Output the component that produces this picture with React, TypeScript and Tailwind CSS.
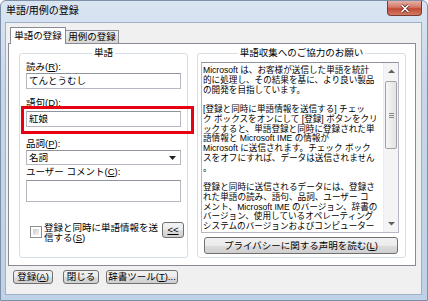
import React from "react";

const U = ({ children }: { children: React.ReactNode }) => (
  <span className="underline underline-offset-[1px]">{children}</span>
);

const btn =
  "flex items-center justify-center rounded-[3px] border border-[#707070] bg-[linear-gradient(#f2f2f2,#ebebeb_50%,#dddddd_50%,#cfcfcf)] leading-[10px] text-black";

const field = "border border-[#b5b9c1] border-t-[#8e939c] bg-white";

const infoLines = [
  "Microsoft は、お客様が送信した単語を統計",
  "的に処理し、その結果を基に、より良い製品",
  "の開発を目指しています。",
  "",
  "[登録と同時に単語情報を送信する] チェッ",
  "ク ボックスをオンにして [登録] ボタンをクリ",
  "ックすると、単語登録と同時に登録された単",
  "語情報と Microsoft IME の情報が",
  "Microsoft に送信されます。チェック ボック",
  "スをオフにすれば、データは送信されません",
  "。",
  "",
  "登録と同時に送信されるデータには、登録さ",
  "れた単語の読み、語句、品詞、ユーザー コ",
  "メント、Microsoft IME のバージョン、辞書の",
  "バージョン、使用しているオペレーティング",
  "システムのバージョンおよびコンピューター",
];

const GroupBox = ({
  title,
  className,
  children,
}: {
  title: string;
  className: string;
  children: React.ReactNode;
}) => (
  <div className={`relative rounded-[3px] border border-[#d5dfe5] ${className}`}>
    <div className="absolute -top-[6px] left-0 right-0 flex justify-center">
      <span className="bg-white px-[2px] leading-[10px]">{title}</span>
    </div>
    {children}
  </div>
);

const ScrollBar = () => (
  <div className="flex w-[15px] shrink-0 flex-col bg-[#f4f4f4] border-l border-[#ececec]">
    <div className="flex h-[16px] items-center justify-center">
      <svg width="7" height="4" viewBox="0 0 7 4">
        <path d="M0 4L3.5 0.5L7 4Z" fill="#606060" />
      </svg>
    </div>
    <div className="mx-[1px] mt-[2px] flex h-[68px] flex-col items-center justify-center gap-[1px] rounded-[2px] border border-[#a3a3a3] bg-[linear-gradient(90deg,#f6f6f6,#e3e3e3)]">
      <div className="h-px w-[5px] bg-[#8a8a8a]" />
      <div className="h-px w-[5px] bg-[#8a8a8a]" />
      <div className="h-px w-[5px] bg-[#8a8a8a]" />
    </div>
    <div className="flex-1" />
    <div className="flex h-[16px] items-center justify-center">
      <svg width="7" height="4" viewBox="0 0 7 4">
        <path d="M0 0L3.5 3.5L7 0Z" fill="#606060" />
      </svg>
    </div>
  </div>
);

export default function App() {
  return (
    <div className="relative h-[301px] w-[428px] overflow-hidden bg-white font-['Liberation_Sans','Noto_Sans_CJK_JP',sans-serif] text-[9.5px] text-black">
      <div className="flex h-[301px] w-[428px] flex-col rounded-t-[6px] border border-[#7d90a8] bg-[linear-gradient(#dae5f2,#c6d7ea_30%,#bfd1e7)]">
        {/* title bar */}
        <div className="flex h-[21px] shrink-0 items-start justify-between pl-[5px] pr-[5px]">
          <span className="mt-[4px] text-[10px] leading-[11px]">単語/用例の登録</span>
          <div className="flex h-[15px] w-[35px] items-center justify-center rounded-b-[4px] border border-t-0 border-[#7b3a31] bg-[linear-gradient(#e6b1a8,#d47766_45%,#c24a36_55%,#d27a63)]">
            <svg width="10" height="9" viewBox="0 0 10 9">
              <path d="M1.5 1L8.5 8M8.5 1L1.5 8" stroke="#5b2620" strokeWidth="3" />
              <path d="M1.5 1L8.5 8M8.5 1L1.5 8" stroke="#ffffff" strokeWidth="1.6" />
            </svg>
          </div>
        </div>

        {/* client area */}
        <div className="mb-[5px] ml-[4px] mr-[5px] flex flex-1 flex-col border border-[#9fb1c8] bg-[#f0f0f0] pl-[2px] pr-[5px] pt-[4px]">
          {/* tabs */}
          <div className="flex items-end pl-[2px]">
            <div className="relative z-10 -mb-px flex h-[17px] w-[56px] items-center justify-center border border-b-0 border-[#898c95] bg-white pb-[1px] leading-[10px]">
              単語の登録
            </div>
            <div className="flex h-[13px] w-[53px] items-center justify-center border border-b-0 border-l-0 border-[#898c95] bg-[linear-gradient(#f2f2f2,#e3e3e3_50%,#d6d6d6)] leading-[10px]">
              用例の登録
            </div>
          </div>

          {/* tab panel */}
          <div className="flex h-[223px] gap-[9px] border border-[#898c95] bg-white pb-[7px] pl-[10px] pr-[9px] pt-[9px]">
            <GroupBox title="単語" className="w-[169px] px-[6px] pt-[8px]">
              <div className="leading-[10px]">
                読み(<U>R</U>):
              </div>
              <div className={`${field} mt-[1px] flex h-[16px] items-center pl-[2px] leading-[10px]`}>
                てんとうむし
              </div>

              <div className="mt-[9px] leading-[10px]">
                語句(<U>D</U>):
              </div>
              <div className={`${field} mt-[3px] flex h-[16px] items-center pl-[2px] leading-[10px]`}>
                紅娘
              </div>

              <div className="mt-[12px] leading-[10px]">
                品詞(<U>P</U>):
              </div>
              <div className={`${field} mt-[1px] flex h-[15px] items-center justify-between pl-[2px] pr-[4px] leading-[10px]`}>
                <span>名詞</span>
                <svg width="7" height="4" viewBox="0 0 7 4">
                  <path d="M0 0L3.5 4L7 0Z" fill="#222" />
                </svg>
              </div>

              <div className="mt-[2px] leading-[10px]">
                ユーザー コメント(<U>C</U>):
              </div>
              <div className={`${field} mt-[3px] h-[22px]`} />

              <div className="-mr-[3px] mt-[20px] flex items-start">
                <div className="ml-[4px] mt-[4px] h-[12px] w-[12px] shrink-0 border border-[#8f8f8f] bg-white p-[2px]">
                  <div className="h-full w-full bg-[linear-gradient(135deg,#cbcbcb,#f4f4f4)]" />
                </div>
                <div className="ml-[2px] mt-[1px] w-[118px] leading-[10px]">
                  登録と同時に単語情報を送
                  <br />
                  信する(<U>S</U>)
                </div>
                <div className={`${btn} ml-auto h-[16px] w-[22px]`}>
                  <U>&lt;&lt;</U>
                </div>
              </div>
            </GroupBox>

            <GroupBox title="単語収集へのご協力のお願い" className="w-[209px] pl-[3px] pt-[8px]">
              <div className={`${field} flex h-[171px] w-[198px]`}>
                <div className="min-w-0 flex-1 overflow-hidden pl-[1px] pt-[3px] text-[8.6px] leading-[9.75px]">
                  {infoLines.map((line, i) => (
                    <div key={i} className="h-[9.75px] whitespace-nowrap">
                      {line}
                    </div>
                  ))}
                </div>
                <ScrollBar />
              </div>
              <div className={`${btn} ml-[3px] mt-[4px] h-[17px] w-[194px]`}>
                プライバシーに関する声明を読む(<U>L</U>)
              </div>
            </GroupBox>
          </div>

          {/* bottom buttons */}
          <div className="ml-[5px] mt-[4px] flex">
            <div className={`${btn} h-[14px] w-[40px]`}>
              登録(<U>A</U>)
            </div>
            <div className={`${btn} ml-[10px] h-[14px] w-[36px]`}>閉じる</div>
            <div className={`${btn} ml-[7px] h-[14px] w-[72px]`}>
              辞書ツール(<U>T</U>)...
            </div>
          </div>
        </div>
      </div>

      {/* red highlight annotation */}
      <div className="pointer-events-none absolute left-[21px] top-[106px] h-[28px] w-[173px] border-[3px] border-[#e60012]" />
    </div>
  );
}
